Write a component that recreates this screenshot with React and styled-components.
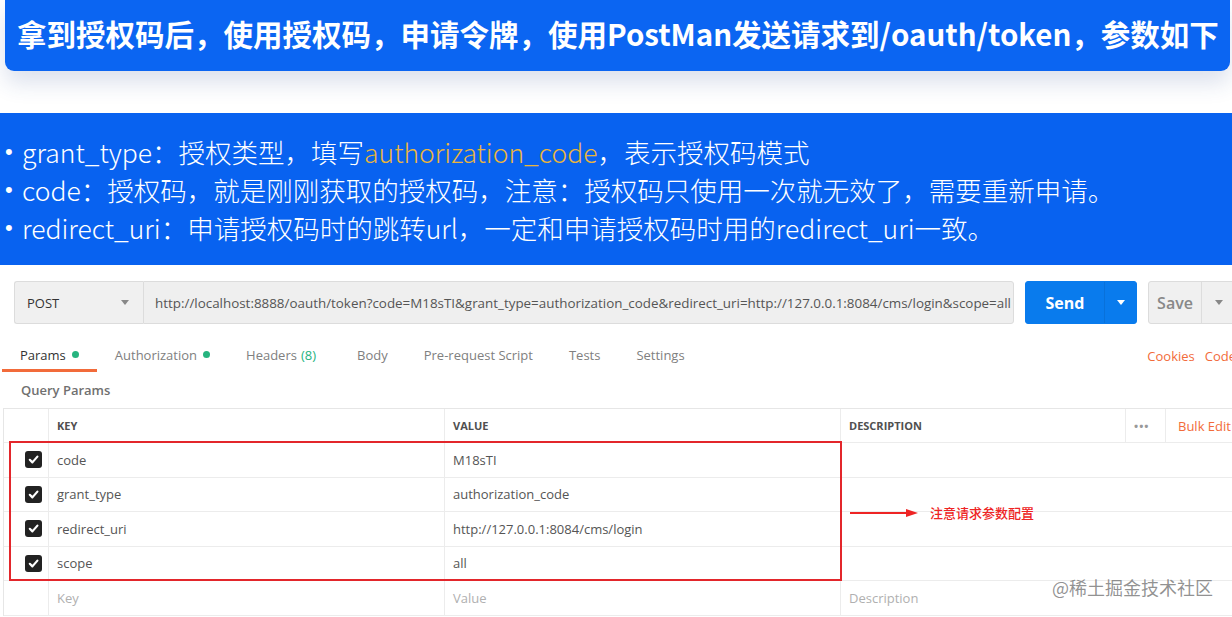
import React from "react";
import styled, { createGlobalStyle } from "styled-components";

const GlobalStyle = createGlobalStyle`
  html, body {
    margin: 0;
    padding: 0;
    background: #fff;
  }
  body {
    font-family: "Open Sans", "Noto Sans CJK SC", sans-serif;
  }
`;

const Page = styled.div`
  position: relative;
  width: 1232px;
  height: 617px;
  overflow: hidden;
  display: flex;
  flex-direction: column;
  background: #fff;
`;

const TitleBar = styled.div`
  flex: 0 0 71px;
  box-sizing: border-box;
  margin: 0 2px 0 5px;
  padding: 0 0 5px 12px;
  display: flex;
  align-items: center;
  background: #0b65f2;
  border-radius: 0 0 9px 9px;
  box-shadow: 0 12px 22px rgba(40, 70, 140, 0.16);
  color: #fff;
  font: 700 29.5px "Noto Sans CJK SC", sans-serif;
  white-space: nowrap;
`;

const BulletPanel = styled.div`
  flex: 0 0 152px;
  box-sizing: border-box;
  margin-top: 42px;
  padding: 20px 0 0 5px;
  background: #0862f0;
  color: #fff;
  font: 300 26.5px/38px "Noto Sans CJK SC", sans-serif;
  white-space: nowrap;
`;

const BulletLine = styled.div`
  height: 38px;
  display: flex;
  align-items: center;
`;

const Bullet = styled.span`
  flex: 0 0 17px;
  line-height: 1;
  font-family: "Liberation Sans", sans-serif;
  font-size: 22px;
`;

const Highlight = styled.span`
  color: #eab53c;
`;

const Postman = styled.div`
  width: 1260px;
  margin-top: 16px;
  display: flex;
  flex-direction: column;
`;

const RequestRow = styled.div`
  display: flex;
  height: 43px;
  padding-left: 14px;
`;

const MethodBox = styled.div`
  flex: 0 0 129px;
  box-sizing: border-box;
  display: flex;
  align-items: center;
  justify-content: space-between;
  padding: 0 14px 0 12px;
  background: #f0f0f0;
  border: 1px solid #dcdcdc;
  border-right: none;
  border-radius: 3px 0 0 3px;
  color: #333;
  font-size: 13px;
`;

const UrlBox = styled.div`
  flex: 0 0 871px;
  box-sizing: border-box;
  display: flex;
  align-items: center;
  padding: 0 11px;
  background: #efefef;
  border: 1px solid #dcdcdc;
  border-radius: 0 3px 3px 0;
  color: #555;
  font-size: 13.4px;
  white-space: nowrap;
  overflow: hidden;
`;

const SplitButton = styled.div`
  flex: 0 0 ${({ $width }) => $width}px;
  box-sizing: border-box;
  margin-left: 11px;
  display: flex;
  background: ${({ $primary }) => ($primary ? "#097bed" : "#f0f0f0")};
  border: 1px solid ${({ $primary }) => ($primary ? "#097bed" : "#dcdcdc")};
  border-radius: 3px;
  color: ${({ $primary }) => ($primary ? "#fff" : "#888")};
  font-size: 16px;
  font-weight: ${({ $primary }) => ($primary ? 700 : 600)};
`;

const ButtonLabel = styled.div`
  flex: 0 0 ${({ $width }) => $width}px;
  display: flex;
  align-items: center;
  justify-content: center;
`;

const ButtonCaret = styled.div`
  flex: 1;
  display: flex;
  align-items: center;
  justify-content: center;
  border-left: 1px solid rgba(0, 0, 0, 0.08);
  max-width: 34px;
`;

const Caret = styled.span`
  width: 0;
  height: 0;
  border-left: 4px solid transparent;
  border-right: 4px solid transparent;
  border-top: 5px solid ${({ $color }) => $color || "#888"};
`;

const TabsRow = styled.div`
  display: flex;
  align-items: stretch;
  height: 36px;
  margin-top: 12px;
  padding: 0 24px 0 2px;
  font-size: 13px;
  color: #808080;
`;

const Tab = styled.div`
  box-sizing: border-box;
  display: flex;
  align-items: center;
  gap: 6px;
  padding: 4px 18px 0;
  border-bottom: 3px solid ${({ $active }) => ($active ? "#f26b3a" : "transparent")};
  color: ${({ $active }) => ($active ? "#333" : "#808080")};
`;

const Dot = styled.span`
  width: 7px;
  height: 7px;
  border-radius: 50%;
  background: #26b47f;
`;

const Count = styled.span`
  color: #26b47f;
  margin: 0 5px 0 -2px;
`;

const Links = styled.div`
  margin-left: auto;
  display: flex;
  align-items: center;
  gap: 10px;
  padding-top: 4px;
  color: #f26b3a;
`;

const QueryLabel = styled.div`
  height: 36px;
  display: flex;
  align-items: center;
  padding-left: 21px;
  font-size: 13px;
  font-weight: 600;
  color: #707070;
`;

const Table = styled.div`
  margin-left: 3px;
  border-top: 1px solid #e6e6e6;
  border-left: 1px solid #e6e6e6;
`;

const Row = styled.div`
  display: grid;
  grid-template-columns: 45px 396px 396px 285px 40px 1fr;
  height: ${({ $head }) => ($head ? 34 : 34.5)}px;
`;

const Cell = styled.div`
  box-sizing: border-box;
  display: flex;
  align-items: center;
  justify-content: ${({ $end }) => ($end ? "flex-end" : "flex-start")};
  padding: ${({ $end }) => ($end ? "0 6px 0 0" : "0 8px")};
  grid-column: span ${({ $span }) => $span || 1};
  border-bottom: 1px solid #ececec;
  border-right: ${({ $open }) => ($open ? "none" : "1px solid #ececec")};
  font-size: ${({ $head }) => ($head ? 11 : 13)}px;
  font-weight: ${({ $head }) => ($head ? 700 : 400)};
  color: ${({ $muted, $head }) => ($muted ? "#b0b0b0" : $head ? "#505050" : "#555")};
  white-space: nowrap;
  overflow: hidden;
`;

const Dots = styled.span`
  color: #999;
  font-size: 11px;
  letter-spacing: 1px;
`;

const BulkEdit = styled.span`
  color: #f26b3a;
  font-size: 13px;
  font-weight: 400;
  padding-left: 4px;
`;

const CheckBox = styled.span`
  width: 17px;
  height: 17px;
  border-radius: 3px;
  background: #222;
  display: flex;
  align-items: center;
  justify-content: center;
`;

const RedBox = styled.div`
  position: absolute;
  left: 9px;
  top: 441px;
  width: 833px;
  height: 140px;
  box-sizing: border-box;
  border: 2px solid #e3262b;
  pointer-events: none;
`;

const Annotation = styled.div`
  position: absolute;
  left: 850px;
  top: 503px;
  display: flex;
  align-items: center;
  gap: 12px;
  color: #ee2424;
  font: 500 13px "Noto Sans CJK SC", sans-serif;
`;

const Watermark = styled.div`
  position: absolute;
  left: 1052px;
  top: 574px;
  font: 400 18px "Noto Sans CJK SC", sans-serif;
  color: rgba(110, 110, 110, 0.75);
`;

const Check = () => (
  <CheckBox>
    <svg width="11" height="11" viewBox="0 0 11 11">
      <polyline points="1.8,5.8 4.4,8.4 9.4,2.6" fill="none" stroke="#fff" strokeWidth="2.2" strokeLinecap="round" strokeLinejoin="round" />
    </svg>
  </CheckBox>
);

const params = [
  { key: "code", value: "M18sTI" },
  { key: "grant_type", value: "authorization_code" },
  { key: "redirect_uri", value: "http://127.0.0.1:8084/cms/login" },
  { key: "scope", value: "all" },
];

const tabs = [
  { label: "Params", dot: true, active: true },
  { label: "Authorization", dot: true },
  { label: "Headers", count: "(8)" },
  { label: "Body" },
  { label: "Pre-request Script" },
  { label: "Tests" },
  { label: "Settings" },
];

const App = () => (
  <Page>
    <GlobalStyle />
    <TitleBar>拿到授权码后，使用授权码，申请令牌，使用PostMan发送请求到/oauth/token，参数如下</TitleBar>
    <BulletPanel>
      <BulletLine>
        <Bullet>•</Bullet>
        <span>
          grant_type：授权类型，填写<Highlight>authorization_code</Highlight>，表示授权码模式
        </span>
      </BulletLine>
      <BulletLine>
        <Bullet>•</Bullet>
        <span>code：授权码，就是刚刚获取的授权码，注意：授权码只使用一次就无效了，需要重新申请。</span>
      </BulletLine>
      <BulletLine>
        <Bullet>•</Bullet>
        <span>redirect_uri：申请授权码时的跳转url，一定和申请授权码时用的redirect_uri一致。</span>
      </BulletLine>
    </BulletPanel>

    <Postman>
      <RequestRow>
        <MethodBox>
          POST
          <Caret />
        </MethodBox>
        <UrlBox>
          http://localhost:8888/oauth/token?code=M18sTI&amp;grant_type=authorization_code&amp;redirect_uri=http://127.0.0.1:8084/cms/login&amp;scope=all
        </UrlBox>
        <SplitButton $primary $width={112}>
          <ButtonLabel $width={78}>Send</ButtonLabel>
          <ButtonCaret>
            <Caret $color="#fff" />
          </ButtonCaret>
        </SplitButton>
        <SplitButton $width={100}>
          <ButtonLabel $width={52}>Save</ButtonLabel>
          <ButtonCaret>
            <Caret />
          </ButtonCaret>
        </SplitButton>
      </RequestRow>

      <TabsRow>
        {tabs.map((t) => (
          <Tab key={t.label} $active={t.active}>
            {t.label}
            {t.count && <Count>{t.count}</Count>}
            {t.dot && <Dot />}
          </Tab>
        ))}
        <Links>
          <span>Cookies</span>
          <span>Code</span>
        </Links>
      </TabsRow>

      <QueryLabel>Query Params</QueryLabel>

      <Table>
        <Row $head>
          <Cell />
          <Cell $head>KEY</Cell>
          <Cell $head>VALUE</Cell>
          <Cell $head>DESCRIPTION</Cell>
          <Cell $head>
            <Dots>•••</Dots>
          </Cell>
          <Cell $head $open>
            <BulkEdit>Bulk Edit</BulkEdit>
          </Cell>
        </Row>
        {params.map((p) => (
          <Row key={p.key}>
            <Cell $end>
              <Check />
            </Cell>
            <Cell>{p.key}</Cell>
            <Cell>{p.value}</Cell>
            <Cell $span={3} $open />
          </Row>
        ))}
        <Row>
          <Cell />
          <Cell $muted>Key</Cell>
          <Cell $muted>Value</Cell>
          <Cell $muted $span={3} $open>
            Description
          </Cell>
        </Row>
      </Table>
    </Postman>

    <RedBox />
    <Annotation>
      <svg width="68" height="10" viewBox="0 0 68 10">
        <line x1="0" y1="5" x2="58" y2="5" stroke="#ee2424" strokeWidth="2" />
        <polygon points="56,1 68,5 56,9" fill="#ee2424" />
      </svg>
      注意请求参数配置
    </Annotation>
    <Watermark>@稀土掘金技术社区</Watermark>
  </Page>
);

export default App;
